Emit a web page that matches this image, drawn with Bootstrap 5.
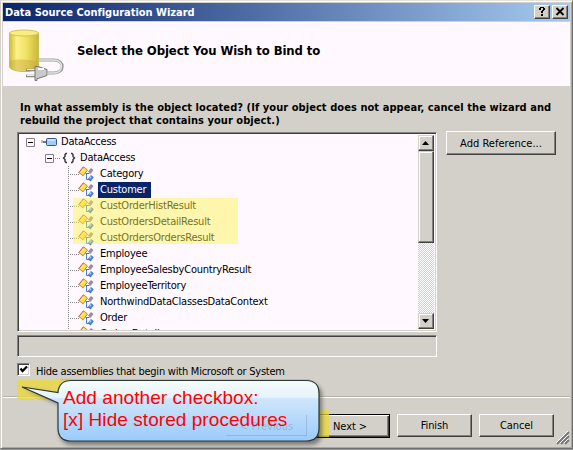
<!DOCTYPE html>
<html lang="en">
<head>
<meta charset="utf-8">
<title>Data Source Configuration Wizard</title>
<link href="https://cdn.jsdelivr.net/npm/bootstrap@5.3.0/dist/css/bootstrap.min.css" rel="stylesheet">
<style>
body{width:573px;height:450px;overflow:hidden;background:#d3d0c9;color:#000;font:11px/13px "DejaVu Sans Condensed","DejaVu Sans",sans-serif;font-stretch:condensed}
.wizard{width:573px;height:449px;padding:2px 1px 0 1px;border:1px solid;border-color:#e4e2de #6f6d6a #6f6d6a #d3d0c9;box-shadow:inset 1px 1px #fff,inset -1px -1px #aaa7a1,0 1px #999}
.titlebar{height:18px;margin:0 1px;padding:0 2px;background:linear-gradient(90deg,#0a246a,#a6caf0);color:#fff;font-weight:700}
.titlebar span{letter-spacing:-.02px}
.tbtns{gap:2px}
.tbtn{width:16px;height:14px}
.raised,.tbtn{background:#d3d0c9;border:1px solid;border-color:#fff #404040 #404040 #fff;box-shadow:inset -1px -1px #85827e;border-radius:0}
.banner{height:64px;margin:1px 1px 0 1px;background:#fff9ff;padding-left:5px}
.banner h1{font-size:13px;line-height:16px;font-weight:700;margin:21px 0 0 11px;letter-spacing:-.09px}
.question{font-weight:700;margin:15px 0 0 18px;height:26px;white-space:nowrap;letter-spacing:.06px}
.work{margin:5px 0 0 15px}
.sunk{border:1px solid;border-color:#85827e #fff #fff #85827e;box-shadow:inset 1px 1px #404040,inset -1px -1px #d3d0c9}
.tree{width:420px;height:200px;background:#fff9ff;padding:1px 2px 2px 2px;overflow:hidden}
.rows{height:196px;overflow:hidden;position:relative}
.node{height:16px;white-space:nowrap;line-height:16px;font-size:11px}
.node svg{flex:none}
.node span{padding:0 5px 0 2px;letter-spacing:-.22px}
.root{padding-left:6px}.ns{padding-left:25px}
.root span{margin-left:1px}
.ns span{margin-left:2px}
.leaf{padding-left:48px;background:repeating-linear-gradient(90deg,#888 0 1px,transparent 1px 2px) 48px 8px/11px 1px no-repeat,repeating-linear-gradient(#888 0 1px,transparent 1px 2px) 48px 0/1px 16px no-repeat}
.leaf svg{margin-left:10px}
.leaf span{margin-left:4px}
.leaf .selected{background:#0a246a;color:#fff;height:16px;padding-right:5px}
.marker{position:absolute;left:53px;top:64px;width:165px;height:46px;background:rgba(250,241,70,.45)}
.track{width:16px;margin-top:1px;background:repeating-conic-gradient(#fff 0 25%,#d3d0c9 0 50%) 0 0/2px 2px}
.track .raised{width:16px;height:16px;border-color:#d3d0c9 #404040 #404040 #d3d0c9;box-shadow:inset -1px -1px #85827e,inset 1px 1px #fff}
.track .thumb{height:92px}
.path{width:420px;height:22px;margin-top:3px}
.check{width:13px;height:13px;background:#fff}
.hide{margin-top:6px;height:14px}
.hide span{margin-left:6px;letter-spacing:-.23px;padding-top:2px}
.bt{height:24px;padding:0;font-size:11px;color:#000;line-height:21px;letter-spacing:-.1px}
.addref{width:110px;margin-left:9px;margin-top:-1px;letter-spacing:.02px}
.foot{margin:19px 1px 0;border-top:1px solid #b5b2ac;box-shadow:inset 0 1px #fff;height:52px;padding:17px 16px 0 0;gap:7px}
.foot .bt{width:75px;height:23px;line-height:20px}
.foot .next{width:80px;height:24px;border:1px solid #000;line-height:21px;box-shadow:inset 1px 1px #fff,inset -1px -1px #404040,inset -2px -2px #85827e}
.overlay{position:absolute;left:0;top:370px}
.under{position:absolute;left:240px;top:420px;color:#7893ab;opacity:.45}
.says{position:absolute;left:63px;top:387px;color:#f00;font:19px/22px "Liberation Sans",Arial,sans-serif;letter-spacing:.06px;white-space:nowrap}
.grip{position:absolute;left:556px;top:431px}
</style>
<script src="https://cdn.jsdelivr.net/npm/bootstrap@5.3.0/dist/js/bootstrap.bundle.min.js"></script>
</head>
<body>
<svg class="d-none">
<symbol id="class" viewBox="0 0 16 16"><path d="M.8 6.500 5.500.8 9.500 4 5 9.800Z" fill="#fbdc55" stroke="#c8862a"/><path d="M.8 6.500 5.500.8" stroke="#b8442a" stroke-dasharray="1 1"/><path d="M2.800 6.500 6 2.800" stroke="#fff3a8"/><path d="M7.500 7.500h4M8.500 7v6.500H11" fill="none" stroke="#3f7fce"/><path d="M10 5.500 13 2l2.500 2L12.500 8Z" fill="#9b8ca8"/><path d="m9.800 13 3.200-4 2.800 2.200-3.300 4.300Z" fill="#3d78cf"/><path d="m11.500 12.500 1.800-2" stroke="#a8d0ff" stroke-width="1.300"/></symbol>
<symbol id="minus" viewBox="0 0 9 9"><path d="M.5.5h8v8h-8z" fill="#fff9ff" stroke="#858085"/><path d="M2 4.500h5" stroke="#000"/></symbol>
</svg>
<main class="wizard">
 <header class="titlebar d-flex align-items-center justify-content-between"><span>Data Source Configuration Wizard</span>
  <div class="d-flex tbtns"><div class="tbtn"><svg width="14" height="12" class="d-block"><path d="M4 3.500V2h1V1h4v1h1v2H9v1H8v2H6V5h1V4h1V2H6v2H4ZM6 8h2v2H6Z"/></svg></div><div class="tbtn"><svg width="14" height="12" class="d-block"><path d="m3.500 2 7 7M10.500 2l-7 7" stroke="#000" stroke-width="1.800"/></svg></div></div>
 </header>
 <section class="banner d-flex">
  <svg width="58" height="64" viewBox="8 22 58 64"><defs><linearGradient id="gold"><stop stop-color="#cdbd35"/><stop offset=".25" stop-color="#fff18a"/><stop offset=".6" stop-color="#eee060"/><stop offset="1" stop-color="#c9b73b"/></linearGradient></defs><path d="M9.500 33v34c2 6 27 6 29 0V33Z" fill="url(#gold)" stroke="#c9bb55"/><path d="M10 61c9-3 19-1 28 0v6c-2 5-26 5-28 0Z" fill="#c8a93c" opacity=".45"/><ellipse cx="24" cy="33" rx="14.500" ry="3" fill="#f8ed7e" stroke="#d0c45a"/><path d="M39 60H54c11 0 11 13 0 13h-6" fill="none" stroke="#9b9b9b" stroke-width="3"/><path d="M39 60H54c10 0 10 13 0 13h-6" fill="none" stroke="#e3e3e3" stroke-width="1.500"/><path d="M26 70h10M26 76h10" stroke="#8c8988" stroke-width="2.500"/><path d="M27 69.500h9M27 75.500h9" stroke="#eee"/><path d="M35 66.500h3l9 3v6l-9 3h-1v2h-2Z" fill="#c9c9c9" stroke="#777"/><path d="M38 69h6" stroke="#fff" stroke-width="2"/></svg>
  <h1>Select the Object You Wish to Bind to</h1>
 </section>
 <p class="question mb-0">In what assembly is the object located? (If your object does not appear, cancel the wizard and<br>rebuild the project that contains your object.)</p>
 <div class="work d-flex align-items-start">
  <div>
   <div class="tree sunk d-flex">
    <div class="rows flex-grow-1">
     <div class="node root d-flex align-items-center"><svg width="9" height="9"><use href="#minus"/></svg><svg class="ms-1" width="19" height="14"><path d="M2 7h6" stroke="#777" stroke-width="2"/><path d="M2 6.500h2" stroke="#bbb" stroke-width="3"/><rect x="7.500" y="3.500" width="10" height="7" rx="1" fill="#a5cdf2" stroke="#32578e"/><path d="M9 5h7" stroke="#eef8ff"/></svg><span>DataAccess</span></div>
     <div class="node ns d-flex align-items-center"><svg width="9" height="9"><use href="#minus"/></svg><svg width="22" height="14"><path d="M1 7.500h6" stroke="#888" stroke-dasharray="1 1"/><path d="M13 2.500h-1l-1 1v2L9.500 7 11 8.500v2l1 1h1M17 2.500h1l1 1v2L20.500 7 19 8.500v2l-1 1h-1" fill="none" stroke="#333" stroke-width="1.400"/></svg><span>DataAccess</span></div>
     <div class="node leaf d-flex align-items-center"><svg width="16" height="16"><use href="#class"/></svg><span>Category</span></div>
     <div class="node leaf d-flex align-items-center"><svg width="16" height="16"><use href="#class"/></svg><span class="selected">Customer</span></div>
     <div class="node leaf d-flex align-items-center"><svg width="16" height="16"><use href="#class"/></svg><span>CustOrderHistResult</span></div>
     <div class="node leaf d-flex align-items-center"><svg width="16" height="16"><use href="#class"/></svg><span>CustOrdersDetailResult</span></div>
     <div class="node leaf d-flex align-items-center"><svg width="16" height="16"><use href="#class"/></svg><span>CustOrdersOrdersResult</span></div>
     <div class="node leaf d-flex align-items-center"><svg width="16" height="16"><use href="#class"/></svg><span>Employee</span></div>
     <div class="node leaf d-flex align-items-center"><svg width="16" height="16"><use href="#class"/></svg><span>EmployeeSalesbyCountryResult</span></div>
     <div class="node leaf d-flex align-items-center"><svg width="16" height="16"><use href="#class"/></svg><span>EmployeeTerritory</span></div>
     <div class="node leaf d-flex align-items-center"><svg width="16" height="16"><use href="#class"/></svg><span>NorthwindDataClassesDataContext</span></div>
     <div class="node leaf d-flex align-items-center"><svg width="16" height="16"><use href="#class"/></svg><span>Order</span></div>
     <div class="node leaf d-flex align-items-center"><svg width="16" height="16"><use href="#class"/></svg><span>Order_Detail</span></div>
     <div class="marker"></div>
    </div>
    <div class="track d-flex flex-column">
     <div class="raised"><svg class="d-block" width="14" height="14"><path d="M3 9h7L6.500 5Z"/></svg></div>
     <div class="raised thumb"></div>
     <div class="raised mt-auto"><svg class="d-block" width="14" height="14"><path d="M3 5h7L6.500 9Z"/></svg></div>
    </div>
   </div>
   <div class="path sunk"></div>
   <label class="hide d-flex"><div class="check sunk"><svg class="d-block" width="11" height="11"><path d="m2.500 4.500 2 2.500L9 2.500" fill="none" stroke="#000" stroke-width="2.200"/></svg></div><span>Hide assemblies that begin with Microsoft or System</span></label>
  </div>
  <button class="btn raised bt addref">Add Reference...</button>
 </div>
 <footer class="foot d-flex justify-content-end"><button class="btn raised bt next">Next &gt;</button><button class="btn raised bt">Finish</button><button class="btn raised bt">Cancel</button></footer>
</main>
<svg class="overlay" width="340" height="80" viewBox="0 370 340 80"><defs><linearGradient id="sky" x2="0" y2="1"><stop stop-color="#f6fcfb"/><stop offset=".28" stop-color="#e6f3fb"/><stop offset=".3" stop-color="#cfe6fb"/><stop offset="1" stop-color="#9bcbfc"/></linearGradient><filter id="sh"><feGaussianBlur stdDeviation="2"/></filter></defs>
<path d="M17 380h50v20H17zM319 410h10v27h-10z" fill="#ecd936" opacity=".75"/><path d="M60 379.500h250" stroke="#d2c73e"/>
<path d="M70 384h238q14 0 14 12v36q0 13-13 13H73q-13 0-13-13v-27L25 389l35 6q1-11 10-11Z" fill="#333" opacity=".55" filter="url(#sh)"/>
<path d="M71 380.500H306q13 0 13 13V428q0 13-13 13H71q-13 0-13-13V403L22 387l36 5.500q1-12 13-12Z" fill="url(#sky)" stroke="#2b3836" stroke-width="1.200"/><path d="M226 435.500h80.500V415" fill="none" stroke="#7da3c6" opacity=".5"/></svg>
<div class="under">&lt; Previous</div>
<div class="says">Add another checkbox:<br>[x] Hide stored procedures</div>
<svg class="grip" width="14" height="14"><path d="M1 13 13 1M5 13l8-8M9 13l4-4" stroke="#777" stroke-width="2"/><path d="M0 12 12 0M4 12l8-8M8 12l4-4" stroke="#fff"/></svg>
</body>
</html>
